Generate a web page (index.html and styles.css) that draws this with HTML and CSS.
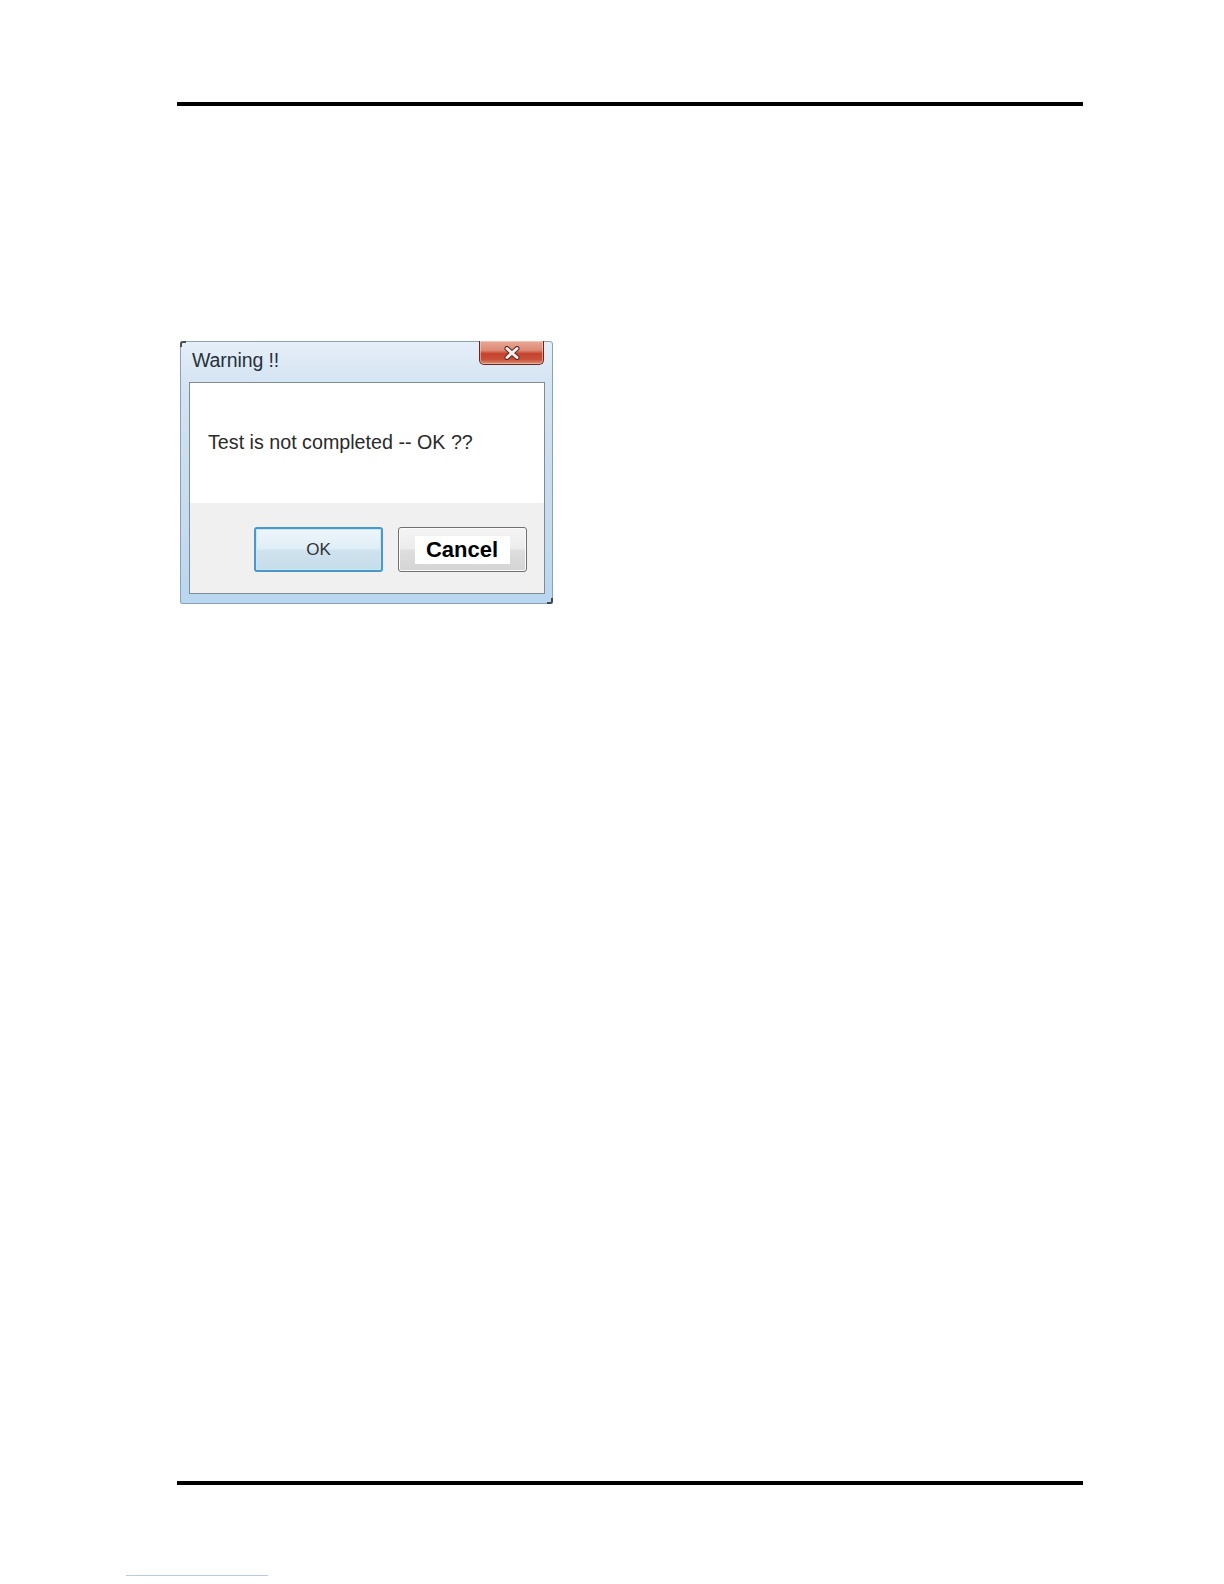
FILE: index.html
```html
<!DOCTYPE html>
<html>
<head>
<meta charset="utf-8">
<link rel="stylesheet" href="styles.css">
</head>
<body>
<div class="page">
  <div class="rule"></div>
  <div class="dialog">
    <div class="titlebar">
      <span class="title">Warning !!</span>
      <div class="close">
        <svg width="20" height="14" viewBox="0 0 20 14">
          <path d="M5 2.5 L15 11.5 M15 2.5 L5 11.5" stroke="#5a2620" stroke-width="5" stroke-linecap="round"/>
          <path d="M5 2.5 L15 11.5 M15 2.5 L5 11.5" stroke="#f4f0ee" stroke-width="3" stroke-linecap="round"/>
        </svg>
      </div>
    </div>
    <div class="client">
      <div class="message">Test is not completed -- OK ??</div>
      <div class="buttons">
        <button class="btn btn-ok">OK</button>
        <button class="btn btn-cancel"><span>Cancel</span></button>
      </div>
    </div>
  </div>
  <div class="rule rule-bottom"></div>
  <div class="link-line"></div>
</div>
</body>
</html>
```

FILE: styles.css
```css
html, body {
  margin: 0;
  padding: 0;
  background: #ffffff;
}
.page {
  padding-top: 102px;
  font-family: "Liberation Sans", Arial, sans-serif;
}
.rule {
  width: 906px;
  height: 4px;
  margin-left: 177px;
  background: #000000;
}
.dialog {
  position: relative;
  width: 373px;
  height: 263px;
  margin-top: 235px;
  margin-left: 180px;
  box-sizing: border-box;
  border: 1px solid #8aa2b8;
  border-radius: 3px 3px 2px 2px;
  background: linear-gradient(180deg, #e6eff8 0%, #d6e5f3 14%, #cddfef 40%, #c6dbee 70%, #b9d7f0 100%);
  display: flex;
  flex-direction: column;
}
.dialog::before {
  content: "";
  position: absolute;
  left: -1px;
  top: -1px;
  width: 4px;
  height: 4px;
  border-left: 2px solid #4a4f55;
  border-top: 2px solid #4a4f55;
  border-radius: 3px 0 0 0;
}
.dialog::after {
  content: "";
  position: absolute;
  right: -1px;
  bottom: -1px;
  width: 4px;
  height: 4px;
  border-right: 2px solid #3f464e;
  border-bottom: 2px solid #3f464e;
  border-radius: 0 0 3px 0;
}
.titlebar {
  position: relative;
  height: 40px;
  flex: none;
  padding-left: 11px;
  box-sizing: border-box;
}
.title {
  display: block;
  padding-top: 6px;
  font-size: 19.5px;
  line-height: 24px;
  color: #26313c;
  letter-spacing: -0.1px;
}
.close {
  position: absolute;
  right: 8px;
  top: -1px;
  width: 65px;
  height: 24px;
  box-sizing: border-box;
  border: 1px solid #5e2a22;
  border-top: none;
  border-radius: 0 0 5px 5px;
  background: linear-gradient(180deg, #e9a897 0%, #dc8b76 40%, #c6432e 55%, #c85038 80%, #de8e73 100%);
  box-shadow: inset 0 0 0 1px rgba(255, 220, 210, 0.5);
  display: flex;
  align-items: center;
  justify-content: center;
}
.client {
  flex: 1;
  margin: 0 7px 9px 8px;
  border: 1px solid #7f8b97;
  background: #ffffff;
  display: flex;
  flex-direction: column;
}
.message {
  height: 120px;
  box-sizing: border-box;
  padding: 47px 0 0 18px;
  font-size: 19.7px;
  line-height: 24px;
  color: #2a2a2a;
  background: #ffffff;
}
.buttons {
  flex: 1;
  background: #f0f0f0;
  display: flex;
  justify-content: flex-end;
  align-items: flex-start;
  gap: 15px;
  padding: 24px 17px 0 0;
}
.btn {
  width: 129px;
  height: 45px;
  margin: 0;
  padding: 0;
  box-sizing: border-box;
  border-radius: 3px;
  font-family: "Liberation Sans", Arial, sans-serif;
  display: flex;
  align-items: center;
  justify-content: center;
}
.btn-ok {
  border: 2px solid #4a97c9;
  background: linear-gradient(180deg, #edf6fb 0%, #dfeef6 48%, #cfe3ee 52%, #c6dce9 100%);
  box-shadow: inset 0 0 0 1px #c4e8f9;
  font-size: 17px;
  color: #333333;
  padding-top: 1px;
}
.btn-cancel {
  border: 1px solid #707070;
  background: linear-gradient(180deg, #f4f4f4 0%, #ececec 48%, #dedede 52%, #d4d4d4 100%);
  box-shadow: inset 0 0 0 1px #fbfbfb;
  font-size: 22px;
  font-weight: bold;
  color: #000000;
}
.btn-cancel span {
  background: #ffffff;
  padding: 1px 12px 1px 11px;
  line-height: 26px;
}
.rule-bottom {
  margin-top: 877px;
}
.link-line {
  width: 142px;
  height: 1px;
  margin-top: 90px;
  margin-left: 126px;
  background: #b9cbe8;
}
```
